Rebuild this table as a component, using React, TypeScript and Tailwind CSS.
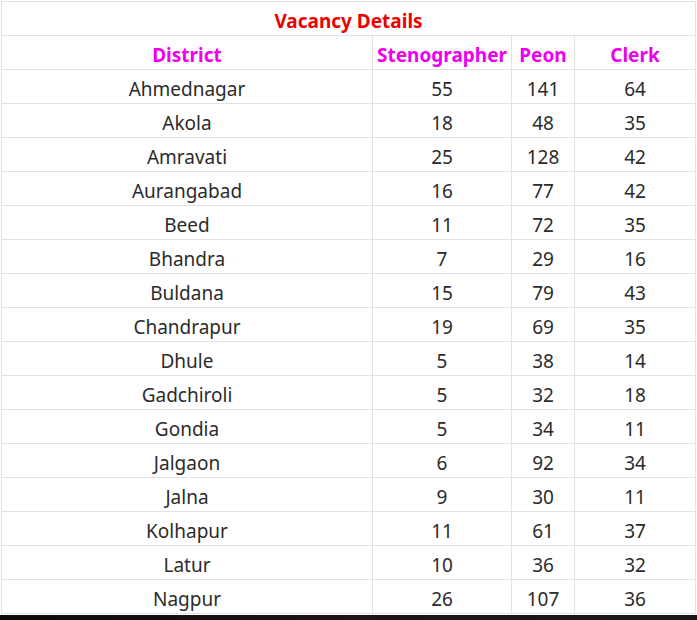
const rows: [string, number, number, number][] = [
  ["Ahmednagar", 55, 141, 64],
  ["Akola", 18, 48, 35],
  ["Amravati", 25, 128, 42],
  ["Aurangabad", 16, 77, 42],
  ["Beed", 11, 72, 35],
  ["Bhandra", 7, 29, 16],
  ["Buldana", 15, 79, 43],
  ["Chandrapur", 19, 69, 35],
  ["Dhule", 5, 38, 14],
  ["Gadchiroli", 5, 32, 18],
  ["Gondia", 5, 34, 11],
  ["Jalgaon", 6, 92, 34],
  ["Jalna", 9, 30, 11],
  ["Kolhapur", 11, 61, 37],
  ["Latur", 10, 36, 32],
  ["Nagpur", 26, 107, 36],
];

const cell =
  "border border-[#e2e2e2] h-[34px] px-0 pt-[5px] pb-0 text-center align-middle leading-[28px]";

export default function App() {
  return (
    <div className="h-[620px] w-[697px] overflow-hidden bg-white font-['Noto_Sans',sans-serif]">
      <div className="pl-[1px] pt-[1px]">
        <table className="w-[694px] table-fixed border-collapse text-[19px] text-[#2b2b2b]">
          <colgroup>
            <col className="w-[371px]" />
            <col className="w-[139px]" />
            <col className="w-[63px]" />
            <col className="w-[121px]" />
          </colgroup>
          <thead>
            <tr>
              <th colSpan={4} className={`${cell} font-bold text-[#ee0000]`}>
                Vacancy Details
              </th>
            </tr>
            <tr className="font-bold text-[#ee00ee]">
              <th className={cell}>District</th>
              <th className={cell}>Stenographer</th>
              <th className={cell}>Peon</th>
              <th className={cell}>Clerk</th>
            </tr>
          </thead>
          <tbody>
            {rows.map(([name, steno, peon, clerk]) => (
              <tr key={name}>
                <td className={cell}>{name}</td>
                <td className={cell}>{steno}</td>
                <td className={cell}>{peon}</td>
                <td className={cell}>{clerk}</td>
              </tr>
            ))}
          </tbody>
        </table>
      </div>
      <div className="mt-[1px] h-[10px] bg-gradient-to-r from-[#0e0908] via-[#1f1218] to-[#1a1519]" />
    </div>
  );
}
